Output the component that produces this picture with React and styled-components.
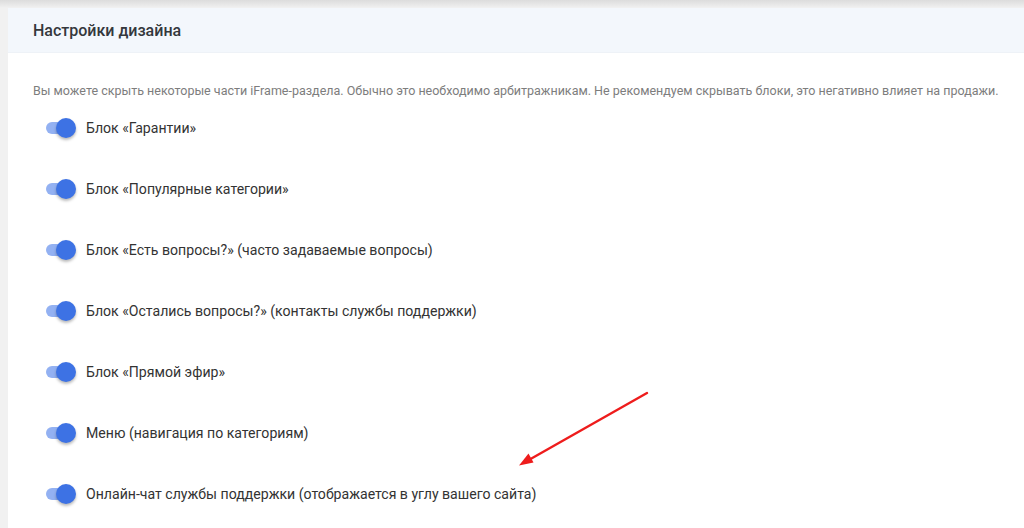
import React from 'react'
import styled, { createGlobalStyle } from 'styled-components'

const GlobalStyle = createGlobalStyle`
  html, body {
    margin: 0;
    padding: 0;
    background: #f1f1f1;
    font-family: Roboto, "Noto Sans", Arial, sans-serif;
  }
`

const blocks = [
  'Блок «Гарантии»',
  'Блок «Популярные категории»',
  'Блок «Есть вопросы?» (часто задаваемые вопросы)',
  'Блок «Остались вопросы?» (контакты службы поддержки)',
  'Блок «Прямой эфир»',
  'Меню (навигация по категориям)',
  'Онлайн-чат службы поддержки (отображается в углу вашего сайта)',
]

function Toggle({ checked, onChange }) {
  return (
    <Switch type="button" $on={checked} onClick={onChange}>
      <span className="track" />
      <span className="knob" />
    </Switch>
  )
}

function App() {
  const [state, setState] = React.useState(blocks.map(() => true))

  const flip = (i) => {
    setState(state.map((v, j) => (j === i ? !v : v)))
  }

  return (
    <Page>
      <GlobalStyle />
      <TopShade />
      <Card>
        <Header>Настройки дизайна</Header>
        <Body>
          <Hint>
            Вы можете скрыть некоторые части iFrame-раздела. Обычно это необходимо арбитражникам. Не рекомендуем скрывать блоки, это негативно влияет на продажи.
          </Hint>
          <List>
            {blocks.map((label, i) => (
              <Row key={label}>
                <Toggle checked={state[i]} onChange={() => flip(i)} />
                <span>{label}</span>
              </Row>
            ))}
          </List>
          {/* red pointer to the chat toggle */}
          <Arrow width="150" height="90" viewBox="0 0 150 90">
            <line x1="142" y1="8" x2="22" y2="76" stroke="#ee1c1c" strokeWidth="2.4" strokeLinecap="round" />
            <path d="M14 80.5 L23.5 68.5 L28.5 77.5 Z" fill="#ee1c1c" />
          </Arrow>
        </Body>
      </Card>
    </Page>
  )
}

const Page = styled.div`
  width: 1024px;
  height: 528px;
  overflow: hidden;
  position: relative;
  padding: 8px 0 0 8px;
  box-sizing: border-box;
`

const TopShade = styled.div`
  position: absolute;
  left: 0;
  right: 0;
  top: 0;
  height: 8px;
  background: linear-gradient(#dcdcdc, #f1f1f1);
`

const Card = styled.div`
  width: 1040px;
  background: #fff;
  height: 540px;
`

const Header = styled.div`
  height: 44px;
  display: flex;
  align-items: center;
  padding-left: 25px;
  background: #f3f7fc;
  border-bottom: 1px solid #eef2f7;
  font-size: 16px;
  font-weight: 500;
  color: #34383c;
`

const Body = styled.div`
  position: relative;
  padding: 30px 25px 0;
`

const Hint = styled.p`
  margin: 0 0 20px;
  font-size: 12.5px;
  color: #7d7d7d;
  white-space: nowrap;
`

const List = styled.div`
  display: flex;
  flex-direction: column;
  gap: 41px;
  padding-left: 13px;
`

const Row = styled.label`
  display: flex;
  align-items: center;
  gap: 10px;
  height: 20px;
  font-size: 14.1px;
  color: #333;
`

const Switch = styled.button`
  position: relative;
  width: 30px;
  height: 20px;
  padding: 0;
  border: none;
  background: none;
  cursor: pointer;

  .track {
    position: absolute;
    left: 0;
    top: 4px;
    width: 28px;
    height: 12px;
    border-radius: 6px;
    background: ${(p) => (p.$on ? '#93b1f2' : '#c8c8c8')};
  }

  .knob {
    position: absolute;
    top: 0;
    left: ${(p) => (p.$on ? '10px' : '0')};
    width: 20px;
    height: 20px;
    border-radius: 50%;
    background: ${(p) => (p.$on ? '#3d72e4' : '#f5f5f5')};
    box-shadow: 0 2px 3px rgba(0, 0, 0, 0.28);
  }
`

const Arrow = styled.svg`
  position: absolute;
  left: 497px;
  top: 332px;
`

export default App
